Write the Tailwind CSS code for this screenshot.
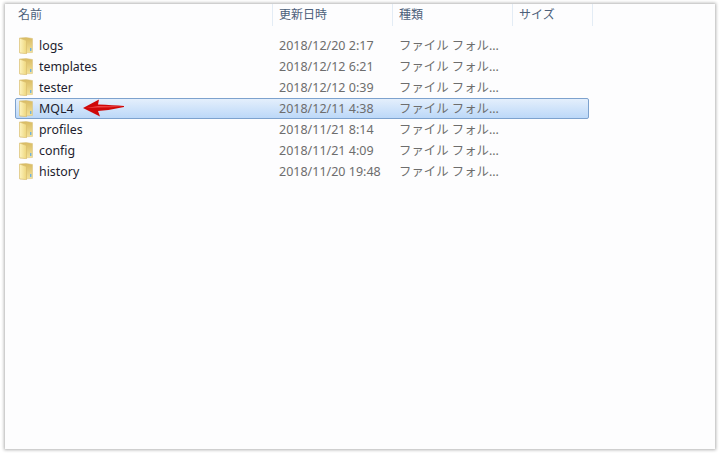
<!DOCTYPE html>
<html lang="ja">
<head>
  <meta charset="UTF-8">
  <title>Explorer</title>
  <script src="https://cdn.jsdelivr.net/npm/@tailwindcss/browser@4"></script>
</head>
<body class="bg-white">

<!-- folder icon used by every row -->
<svg class="absolute w-0 h-0">
  <defs>
    <linearGradient id="fold" x1="0" y1="0" x2="1" y2="0">
      <stop offset="0" stop-color="#fdf4c0"/>
      <stop offset="1" stop-color="#eed67c"/>
    </linearGradient>
    <linearGradient id="flap" x1="0" y1="0" x2="0" y2="1">
      <stop offset="0" stop-color="#d9bb62"/>
      <stop offset="1" stop-color="#f3e29a"/>
    </linearGradient>
    <symbol id="folder" viewBox="0 0 14 17">
      <path d="M1 1 L7 0.5 L13.5 1.5 L13.5 15.5 L1 16 Z" fill="url(#flap)" stroke="#d8c07a" stroke-width="0.5"/>
      <path d="M0.5 1 L7.5 3.5 L7.5 16.8 L0.5 15.8 Z" fill="url(#fold)" stroke="#d6bb6b" stroke-width="0.6"/>
      <rect x="11" y="11" width="1.4" height="3" fill="#6fb2de"/>
    </symbol>
  </defs>
</svg>

<div class="w-[720px] h-[454px] pt-[4px] pl-[5px] font-['Noto_Sans','Noto_Sans_CJK_JP',sans-serif]">
  <div class="relative w-[710px] h-[445px] bg-[#fdfdfe] shadow-[0_0_3px_1px_rgba(0,0,0,0.3)]">

    <!-- column headers -->
    <div class="flex h-[22px] text-[12px] text-[#4c607a] leading-[21px]">
      <div class="w-[268px] pl-[13px] border-r border-[#e3ecf5]">名前</div>
      <div class="w-[120px] pl-[6px] border-r border-[#e3ecf5]">更新日時</div>
      <div class="w-[120px] pl-[6px] border-r border-[#e3ecf5]">種類</div>
      <div class="w-[80px] pl-[6px] border-r border-[#e3ecf5]">サイズ</div>
    </div>

    <!-- file rows -->
    <div class="mt-[9px] ml-[10px] w-[574px] flex flex-col text-[12.4px] leading-[21px] text-[#6d6d6d]">
      <div class="flex h-[21px] items-center border border-transparent">
        <div class="w-[263px] flex items-center"><svg class="w-[14px] h-[17px] ml-[3px] mr-[6px]"><use href="#folder"/></svg><span class="text-[#1e1e2e]">logs</span></div>
        <div class="w-[120px] text-[12.5px]">2018/12/20 2:17</div>
        <div>ファイル フォル...</div>
      </div>
      <div class="flex h-[21px] items-center border border-transparent">
        <div class="w-[263px] flex items-center"><svg class="w-[14px] h-[17px] ml-[3px] mr-[6px]"><use href="#folder"/></svg><span class="text-[#1e1e2e]">templates</span></div>
        <div class="w-[120px] text-[12.5px]">2018/12/12 6:21</div>
        <div>ファイル フォル...</div>
      </div>
      <div class="flex h-[21px] items-center border border-transparent">
        <div class="w-[263px] flex items-center"><svg class="w-[14px] h-[17px] ml-[3px] mr-[6px]"><use href="#folder"/></svg><span class="text-[#1e1e2e]">tester</span></div>
        <div class="w-[120px] text-[12.5px]">2018/12/12 0:39</div>
        <div>ファイル フォル...</div>
      </div>
      <div class="flex h-[21px] items-center border border-[#7da2ce] rounded-[2px] bg-gradient-to-b from-[#e4effc] to-[#bcd8f8]">
        <div class="w-[263px] flex items-center"><svg class="w-[14px] h-[17px] ml-[3px] mr-[6px]"><use href="#folder"/></svg><span class="text-[#1e1e2e]">MQL4</span></div>
        <div class="w-[120px] text-[12.5px]">2018/12/11 4:38</div>
        <div>ファイル フォル...</div>
      </div>
      <div class="flex h-[21px] items-center border border-transparent">
        <div class="w-[263px] flex items-center"><svg class="w-[14px] h-[17px] ml-[3px] mr-[6px]"><use href="#folder"/></svg><span class="text-[#1e1e2e]">profiles</span></div>
        <div class="w-[120px] text-[12.5px]">2018/11/21 8:14</div>
        <div>ファイル フォル...</div>
      </div>
      <div class="flex h-[21px] items-center border border-transparent">
        <div class="w-[263px] flex items-center"><svg class="w-[14px] h-[17px] ml-[3px] mr-[6px]"><use href="#folder"/></svg><span class="text-[#1e1e2e]">config</span></div>
        <div class="w-[120px] text-[12.5px]">2018/11/21 4:09</div>
        <div>ファイル フォル...</div>
      </div>
      <div class="flex h-[21px] items-center border border-transparent">
        <div class="w-[263px] flex items-center"><svg class="w-[14px] h-[17px] ml-[3px] mr-[6px]"><use href="#folder"/></svg><span class="text-[#1e1e2e]">history</span></div>
        <div class="w-[120px] text-[12.5px]">2018/11/20 19:48</div>
        <div>ファイル フォル...</div>
      </div>
    </div>

    <!-- red annotation arrow -->
    <svg class="absolute left-[78px] top-[95px] w-[42px] h-[18px]" viewBox="0 0 42 18">
      <path d="M0 9 L16 0.5 L15 5.5 Q30 6 41 7 L41 8 Q28 11 15 12 L17 17.5 Z" fill="#cf0808"/>
      <path d="M3 9 L15 7 Q28 7 40 7.4 Q28 8.4 15 8.6 Z" fill="#f04848"/>
    </svg>
  </div>
</div>

</body>
</html>
